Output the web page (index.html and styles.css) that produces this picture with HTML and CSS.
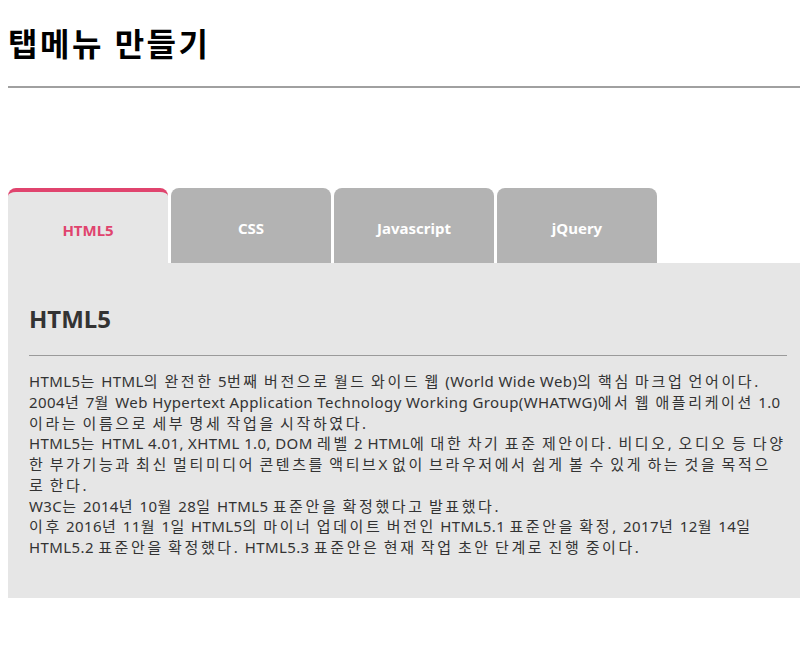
FILE: index.html
```html
<!DOCTYPE html>
<html lang="ko">
<head>
<meta charset="utf-8">
<title>탭메뉴 만들기</title>
<link rel="stylesheet" href="styles.css">
</head>
<body>
<h1 class="title">탭메뉴 만들기</h1>
<hr class="rule">
<div class="tabs">
  <ul class="tab-list">
    <li class="tab active">HTML5</li>
    <li class="tab">CSS</li>
    <li class="tab">Javascript</li>
    <li class="tab">jQuery</li>
  </ul>
  <div class="panel">
    <h2 class="panel-title">HTML5</h2>
    <hr class="panel-rule">
    <p class="panel-text"><span class="en">HTML5</span>는 <span class="en">HTML</span>의 완전한 <span class="en">5</span>번째 버전으로 월드 와이드 웹 <span class="en">(World Wide Web)</span>의 핵심 마크업 언어이다.<br><span class="en">2004</span>년 <span class="en">7</span>월 <span class="en">Web Hypertext Application Technology Working Group(WHATWG)</span>에서 웹 애플리케이션 <span class="en">1.0</span>이라는 이름으로 세부 명세 작업을 시작하였다.<br><span class="en">HTML5</span>는 <span class="en">HTML 4.01, XHTML 1.0, DOM</span> 레벨 <span class="en">2 HTML</span>에 대한 차기 표준 제안이다. 비디오, 오디오 등 다양한 부가기능과 최신 멀티미디어 콘텐츠를 액티브<span class="en">X</span> 없이 브라우저에서 쉽게 볼 수 있게 하는 것을 목적으로 한다.<br><span class="en">W3C</span>는 <span class="en">2014</span>년 <span class="en">10</span>월 <span class="en">28</span>일 <span class="en">HTML5</span> 표준안을 확정했다고 발표했다.<br>이후 <span class="en">2016</span>년 <span class="en">11</span>월 <span class="en">1</span>일 <span class="en">HTML5</span>의 마이너 업데이트 버전인 <span class="en">HTML5.1</span> 표준안을 확정, <span class="en">2017</span>년 <span class="en">12</span>월 <span class="en">14</span>일 <span class="en">HTML5.2</span> 표준안을 확정했다. <span class="en">HTML5.3</span> 표준안은 현재 작업 초안 단계로 진행 중이다.</p>
  </div>
</div>
</body>
</html>
```
FILE: styles.css
```css
body {
  margin: 8px;
  font-family: "Noto Sans", "Noto Sans CJK KR", sans-serif;
  color: #000;
  background: #fff;
}
.title {
  margin: 16px 0 0;
  font-size: 32px;
  line-height: 40px;
  font-weight: bold;
  letter-spacing: 2.5px;
}
.rule {
  margin: 22px 0 0;
  border: 0;
  border-top: 2px solid #a0a0a0;
  height: 0;
}
.tabs {
  margin-top: 100px;
}
.tab-list {
  list-style: none;
  margin: 0;
  padding: 0;
  display: flex;
  gap: 3px;
}
.tab {
  width: 160px;
  height: 75px;
  box-sizing: border-box;
  background: #b3b3b3;
  color: #fff;
  border-radius: 8px 8px 0 0;
  display: flex;
  align-items: center;
  justify-content: center;
  font-size: 15px;
  font-weight: bold;
  padding-top: 4px;
}
.tab.active {
  background: #e6e6e6;
  color: #e0446e;
  border-top: 4px solid #e0446e;
  padding-top: 4px;
}
.panel {
  margin-right: -8px;
  height: 335px;
  box-sizing: border-box;
  background: #e6e6e6;
  padding: 20px 21px 0;
  color: #333;
}
.panel-title {
  margin: 21px 0 0;
  font-size: 24px;
  line-height: 30px;
  font-weight: bold;
}
.panel-rule {
  margin: 21px 0 0;
  border: 0;
  border-top: 1px solid #9a9a9a;
  height: 0;
}
.panel-text {
  margin: 15px 0 0;
  font-size: 15px;
  line-height: 20.75px;
  letter-spacing: 2.6px;
  word-spacing: -2.2px;
}
.en {
  letter-spacing: 0.4px;
  word-spacing: 0;
}
```
